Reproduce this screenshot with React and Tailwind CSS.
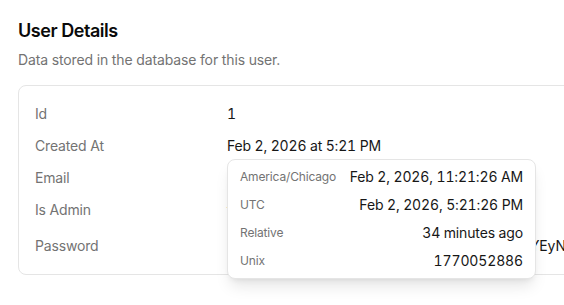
import React from 'react';

const rows = [
  { label: 'Id', value: '1' },
  { label: 'Created At', value: 'Feb 2, 2026 at 5:21 PM' },
  { label: 'Email', value: 'admin@example.com' },
  { label: 'Is Admin', value: 'true' },
];

const times = [
  { label: 'America/Chicago', value: 'Feb 2, 2026, 11:21:26 AM' },
  { label: 'UTC', value: 'Feb 2, 2026, 5:21:26 PM' },
  { label: 'Relative', value: '34 minutes ago' },
  { label: 'Unix', value: '1770052886' },
];

function TimeTooltip() {
  return (
    <div className="absolute left-0 top-[23px] z-10 w-[309px] rounded-lg border border-neutral-200 bg-white px-3 py-[3px] shadow-lg">
      {times.map((t) => (
        <div key={t.label} className="flex h-7 items-center justify-between">
          <span className="text-xs text-neutral-500">{t.label}</span>
          <span className="text-sm tabular-nums tracking-[-0.01em] text-neutral-900">{t.value}</span>
        </div>
      ))}
    </div>
  );
}

export default function App() {
  return (
    <div
      className="h-[305px] w-[564px] overflow-hidden bg-white px-[18px] pt-[20px]"
      style={{ fontFamily: 'Inter, "Noto Sans", sans-serif' }}
    >
      <h2 className="text-lg font-semibold leading-[22px] tracking-[-0.025em] text-neutral-950">User Details</h2>
      <p className="mt-[8px] text-sm leading-5 tracking-[-0.01em] text-neutral-500">Data stored in the database for this user.</p>

      <div className="mt-[15px] w-[620px] rounded-lg border border-neutral-200 px-4 pt-3 pb-2 tracking-[-0.01em]">
        {rows.map((r) => (
          <div key={r.label} className="flex h-8 items-center text-sm">
            <span className="w-[192px] shrink-0 text-neutral-500">{r.label}</span>
            <span className="relative tabular-nums text-neutral-900">
              {r.value}
              {r.label === 'Created At' && <TimeTooltip />}
            </span>
          </div>
        ))}
        <div className="flex h-10 items-center text-sm">
          <span className="w-[192px] shrink-0 text-neutral-500">Password</span>
          <span className="whitespace-nowrap text-neutral-900">$2b$10$N9qo8uLOickgx2ZMRZoMyeIjZAgcflriYEyN3kd9Qx</span>
        </div>
      </div>
    </div>
  );
}
